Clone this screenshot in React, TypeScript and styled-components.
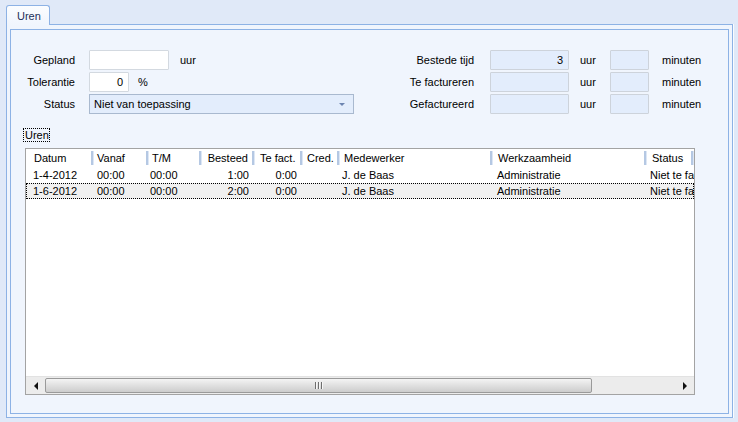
import styled, { createGlobalStyle } from "styled-components";

const GlobalStyle = createGlobalStyle`
  html, body {
    margin: 0;
    padding: 0;
  }
  body {
    background: #e0e9f8;
    font-family: "Liberation Sans", Arial, sans-serif;
    font-size: 11px;
    color: #000;
  }
`;

const Window = styled.div`
  width: 738px;
  height: 422px;
  box-sizing: border-box;
  padding: 5px 6px 0 6px;
  background: #e0e9f8;
  display: flex;
  flex-direction: column;
`;

const TabStrip = styled.div`
  display: flex;
  position: relative;
  z-index: 1;
  margin-bottom: -1px;
`;

const Tab = styled.div`
  width: 44px;
  height: 20px;
  box-sizing: border-box;
  border: 1px solid #8db2e5;
  border-bottom: none;
  border-radius: 3px 3px 0 0;
  background: linear-gradient(#fbfdff, #f0f5fd);
  padding: 3px 0 0 10px;
  line-height: 14px;
  font-size: 11px;
  color: #1b2f57;
`;

const Panel = styled.div`
  width: 727px;
  height: 394px;
  box-sizing: border-box;
  border: 1px solid #8db2e5;
  box-shadow: 1px 0 0 #fafcff;
  background: #f0f5fd;
  padding: 4px 3px 3px 3px;
  display: flex;
`;

const Inner = styled.div`
  flex: 1;
  border: 1px solid #8db2e5;
  padding-top: 20px;
  display: flex;
  flex-direction: column;
`;

const Form = styled.div`
  display: flex;
`;

const Column = styled.div<{ $width?: number }>`
  width: ${({ $width }) => ($width ? `${$width}px` : "auto")};
  display: flex;
  flex-direction: column;
  gap: 2px;
`;

const Row = styled.div`
  display: flex;
  align-items: center;
  height: 20px;
`;

const Label = styled.div<{ $width: number; $gap: number }>`
  width: ${({ $width }) => $width}px;
  margin-right: ${({ $gap }) => $gap}px;
  text-align: right;
  white-space: nowrap;
`;

const Field = styled.div<{ $width: number; $disabled?: boolean }>`
  width: ${({ $width }) => $width}px;
  height: 20px;
  box-sizing: border-box;
  border: 1px solid ${({ $disabled }) => ($disabled ? "#cdd3db" : "#d3d9e0")};
  background: ${({ $disabled }) => ($disabled ? "#e3edfc" : "#ffffff")};
  border-radius: 1px;
  padding: 0 5px;
  line-height: 18px;
  text-align: right;
`;

const Unit = styled.div<{ $left: number; $width?: number }>`
  margin-left: ${({ $left }) => $left}px;
  width: ${({ $width }) => ($width ? `${$width}px` : "auto")};
`;

const Combo = styled.div`
  width: 265px;
  height: 20px;
  box-sizing: border-box;
  border: 1px solid #a9b9cf;
  background: #e3edfc;
  display: flex;
  align-items: center;
  padding: 0 8px 0 4px;
`;

const ComboText = styled.span`
  flex: 1;
`;

const ComboArrow = styled.span`
  width: 0;
  height: 0;
  border-left: 3px solid transparent;
  border-right: 3px solid transparent;
  border-top: 3px solid #6c84b0;
`;

const GroupLabel = styled.div`
  align-self: flex-start;
  margin: 14px 0 0 12px;
  border: 1px dotted #000;
  line-height: 12px;
  padding: 0 0 0 1px;
`;

const Grid = styled.div`
  margin: 6px 0 0 14px;
  width: 670px;
  height: 247px;
  box-sizing: border-box;
  border: 1px solid #a3a3a3;
  background: #fff;
  display: flex;
  flex-direction: column;
  overflow: hidden;
`;

const HeaderRow = styled.div`
  display: flex;
  height: 18px;
  flex: none;
`;

const HeaderCell = styled.div<{ $width: number; $right?: boolean; $pad: number }>`
  position: relative;
  width: ${({ $width }) => $width}px;
  flex: none;
  box-sizing: border-box;
  padding: 0 ${({ $right }) => ($right ? 7 : 4)}px 0 ${({ $pad }) => $pad}px;
  text-align: ${({ $right }) => ($right ? "right" : "left")};
  line-height: 18px;
  white-space: nowrap;
  overflow: hidden;
  &::after {
    content: "";
    position: absolute;
    right: 0;
    top: 2px;
    bottom: 2px;
    width: 2px;
    background: #b5c8e3;
    border-right: 1px solid #dde7f5;
  }
`;

const DataRow = styled.div<{ $selected?: boolean }>`
  display: flex;
  height: 16px;
  flex: none;
  box-sizing: border-box;
  background: ${({ $selected }) => ($selected ? "#f0f0f0" : "#fff")};
  border: 1px dotted ${({ $selected }) => ($selected ? "#000" : "transparent")};
`;

const Cell = styled.div<{ $width: number; $right?: boolean; $pad: number }>`
  width: ${({ $width }) => $width}px;
  flex: none;
  box-sizing: border-box;
  padding: 0 ${({ $right }) => ($right ? 6 : 0)}px 0 ${({ $pad }) => $pad}px;
  text-align: ${({ $right }) => ($right ? "right" : "left")};
  line-height: 14px;
  white-space: nowrap;
  overflow: hidden;
`;

const Spacer = styled.div`
  flex: 1;
`;

const ScrollBar = styled.div`
  height: 17px;
  flex: none;
  display: flex;
  background: #ececec;
  border-top: 1px solid #e2e2e2;
`;

const ArrowButton = styled.div`
  width: 19px;
  display: flex;
  align-items: center;
  justify-content: center;
`;

const Triangle = styled.span<{ $dir: "left" | "right" }>`
  width: 0;
  height: 0;
  border-top: 4px solid transparent;
  border-bottom: 4px solid transparent;
  ${({ $dir }) =>
    $dir === "left" ? "border-right: 4px solid #111;" : "border-left: 4px solid #111;"}
`;

const Track = styled.div`
  flex: 1;
  display: flex;
  align-items: center;
`;

const Thumb = styled.div`
  width: 547px;
  height: 15px;
  box-sizing: border-box;
  border: 1px solid #9a9a9a;
  border-radius: 2px;
  background: linear-gradient(#f4f4f4, #e0e0e0 50%, #cdcdcd);
  display: flex;
  align-items: center;
  justify-content: center;
  gap: 1px;
`;

const Grip = styled.span`
  width: 1px;
  height: 7px;
  background: #6e6e6e;
  border-right: 1px solid #f6f6f6;
`;

const columns = [
  { key: "datum", title: "Datum", width: 68, pad: 8, dataPad: 7 },
  { key: "vanaf", title: "Vanaf", width: 55, pad: 3, dataPad: 3 },
  { key: "tm", title: "T/M", width: 53, pad: 3, dataPad: 1 },
  { key: "besteed", title: "Besteed", width: 53, pad: 3, dataPad: 0, right: true },
  { key: "tefact", title: "Te fact.", width: 48, pad: 5, dataPad: 0, right: true },
  { key: "cred", title: "Cred.", width: 37, pad: 4, dataPad: 3 },
  { key: "medewerker", title: "Medewerker", width: 153, pad: 4, dataPad: 2 },
  { key: "werk", title: "Werkzaamheid", width: 154, pad: 5, dataPad: 4 },
  { key: "status", title: "Status", width: 47, pad: 5, dataPad: 3 },
];

const rows: Record<string, string>[] = [
  {
    datum: "1-4-2012",
    vanaf: "00:00",
    tm: "00:00",
    besteed: "1:00",
    tefact: "0:00",
    cred: "",
    medewerker: "J. de Baas",
    werk: "Administratie",
    status: "Niet te factureren",
  },
  {
    datum: "1-6-2012",
    vanaf: "00:00",
    tm: "00:00",
    besteed: "2:00",
    tefact: "0:00",
    cred: "",
    medewerker: "J. de Baas",
    werk: "Administratie",
    status: "Niet te factureren",
  },
];

const besteed = [
  { label: "Bestede tijd", value: "3" },
  { label: "Te factureren", value: "" },
  { label: "Gefactureerd", value: "" },
];

export default function App() {
  return (
    <>
      <GlobalStyle />
      <Window>
        <TabStrip>
          <Tab>Uren</Tab>
        </TabStrip>
        <Panel>
          <Inner>
            <Form>
              <Column $width={369}>
                <Row>
                  <Label $width={64} $gap={14}>Gepland</Label>
                  <Field $width={80} />
                  <Unit $left={11}>uur</Unit>
                </Row>
                <Row>
                  <Label $width={64} $gap={14}>Tolerantie</Label>
                  <Field $width={40}>0</Field>
                  <Unit $left={9}>%</Unit>
                </Row>
                <Row>
                  <Label $width={64} $gap={14}>Status</Label>
                  <Combo>
                    <ComboText>Niet van toepassing</ComboText>
                    <ComboArrow />
                  </Combo>
                </Row>
              </Column>
              <Column>
                {besteed.map((b) => (
                  <Row key={b.label}>
                    <Label $width={94} $gap={16}>{b.label}</Label>
                    <Field $width={79} $disabled>{b.value}</Field>
                    <Unit $left={11} $width={30}>uur</Unit>
                    <Field $width={39} $disabled />
                    <Unit $left={13}>minuten</Unit>
                  </Row>
                ))}
              </Column>
            </Form>
            <GroupLabel>Uren</GroupLabel>
            <Grid>
              <HeaderRow>
                {columns.map((c) => (
                  <HeaderCell key={c.key} $width={c.width} $pad={c.pad} $right={c.key === "besteed"}>
                    {c.title}
                  </HeaderCell>
                ))}
              </HeaderRow>
              {rows.map((r, i) => (
                <DataRow key={i} $selected={i === 1}>
                  {columns.map((c, ci) => (
                    <Cell
                      key={c.key}
                      $width={ci === 0 ? c.width - 1 : c.width}
                      $pad={ci === 0 ? c.dataPad - 1 : c.dataPad}
                      $right={c.right}
                    >
                      {r[c.key]}
                    </Cell>
                  ))}
                </DataRow>
              ))}
              <Spacer />
              <ScrollBar>
                <ArrowButton>
                  <Triangle $dir="left" />
                </ArrowButton>
                <Track>
                  <Thumb>
                    <Grip />
                    <Grip />
                    <Grip />
                  </Thumb>
                </Track>
                <ArrowButton>
                  <Triangle $dir="right" />
                </ArrowButton>
              </ScrollBar>
            </Grid>
          </Inner>
        </Panel>
      </Window>
    </>
  );
}
